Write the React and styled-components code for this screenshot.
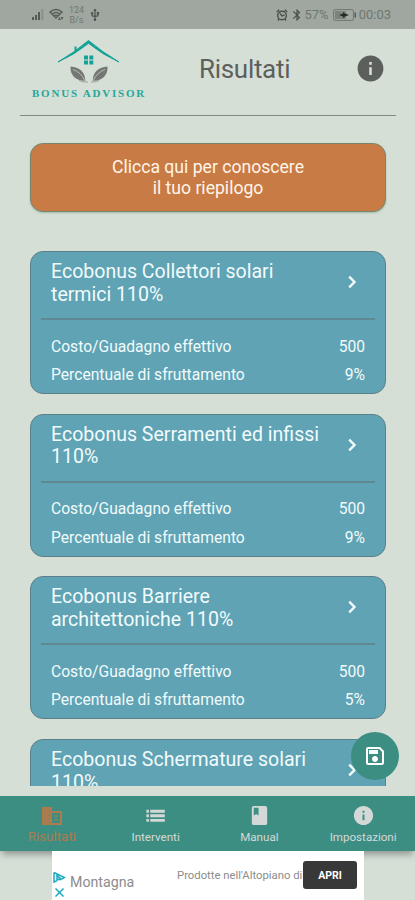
import React from "react"
import styled, { createGlobalStyle } from "styled-components"
import {
  MdBluetooth,
  MdBook,
  MdInfo,
  MdOutlineSave,
  MdUsb,
} from "react-icons/md"

const SignalIcon = () => (
  <svg width="13" height="13" viewBox="0 0 13 13">
    <path d="M0 12V9h2v3zM3 12V7h2v5zM6 12V4h2v8z" fill="#555b56" />
    <path d="M9 12V1h2.5v11z" fill="#8b938c" />
  </svg>
)

const WifiIcon = () => (
  <svg width="15" height="13" viewBox="0 0 15 13">
    <g fill="none" stroke="#555b56" strokeWidth="1.3">
      <path d="M1 4q6-5 12 0L7 10z" />
      <path d="M3 6q4-3 8 0M5 8q2-1.6 4 0" />
    </g>
    <path d="M9 12l1.5-3 1.5 3zM11.5 9h3L13 12z" fill="#555b56" />
  </svg>
)

const AlarmIcon = () => (
  <svg width="12" height="12" viewBox="0 0 12 12">
    <g fill="none" stroke="#4b514c" strokeWidth="1.4">
      <circle cx="6" cy="6.5" r="4.3" />
      <path d="M.7 3L3.2.8M11.3 3L8.8.8M4 4.5L6 7l2.4-1M3 10l-1 1.5M9 10l1 1.5" />
    </g>
  </svg>
)

const BatteryIcon = () => (
  <svg width="24" height="12" viewBox="0 0 24 12">
    <rect x=".6" y=".6" width="19.8" height="10.8" rx="1.5" fill="none" stroke="#6f776f" />
    <path d="M2 2h11v8H2z" fill="#7b837c" />
    <path d="M6 6l4-1.5V3l2 1.5L16 6l-4 1.5L10 9V7.5z" fill="#252a26" />
    <path d="M21.5 3.5H23v5h-1.5z" fill="#555b56" />
  </svg>
)

const ChevronIcon = () => (
  <svg width="24" height="24" viewBox="0 0 24 24">
    <path d="M9.2 6.7l5.3 5.3-5.3 5.3" fill="none" stroke="currentColor" strokeWidth="2.4" />
  </svg>
)

const OfficeIcon = ({ size }) => (
  <svg width={size} height={size} viewBox="0 0 24 24" fill="currentColor">
    <path d="M2 3h10v4h10v14H2zm10 6v10h8V9z" fillRule="evenodd" />
    <path d="M14.5 11h3v2h-3zM14.5 15h3v2h-3z" opacity=".75" />
    <path
      d="M4 7h2M8 7h2M4 11h2M8 11h2M4 15h2M8 15h2M4 18.5h2M8 18.5h2"
      stroke="#7f8464"
      strokeWidth=".9"
    />
  </svg>
)

const ListIcon = ({ size }) => (
  <svg width={size} height={size} viewBox="0 0 24 24" fill="currentColor">
    <path d="M2.5 6h2.6v3H2.5zM2.5 10.8h2.6v3H2.5zM2.5 15.6h2.6v3H2.5z" />
    <path d="M6.5 6h15.2v3H6.5zM6.5 10.8h15.2v3H6.5zM6.5 15.6h15.2v3H6.5z" />
  </svg>
)

const HouseLogo = () => (
  <svg width="64" height="46" viewBox="0 0 64 46">
    <path
      d="M1 24Q18 14 31.5 2.5 45 14 62 24 45 16.5 31.5 5.3 18 16.5 1 24z"
      fill="#13a396"
      stroke="#13a396"
      strokeWidth="1"
    />
    <path d="M17.5 14V8.5h2v4z" fill="#13a396" />
    <path
      d="M27 17.5h4v4h-4zM32.3 17.5h4v4h-4zM27 22.5h4v4h-4zM32.3 22.5h4v4h-4z"
      fill="#13a396"
    />
    <g fill="#747773">
      <path d="M13.5 28.5c9 1 14.5 5 14.8 14.2C19 43 13 37.5 13.5 28.5z" />
      <path d="M50.5 28.5c-9 1-14.5 5-14.8 14.2C45 43 51 37.5 50.5 28.5z" />
    </g>
    <g fill="none" stroke="#c3ccc4" strokeWidth=".8">
      <path d="M16 31.5q8 3 11.5 10.5" />
      <path d="M48 31.5q-8 3-11.5 10.5" />
    </g>
    <path
      d="M22 42.5q5 2.2 9 1.5M42 42.5q-5 2.2-8 1.5"
      fill="none"
      stroke="#8b8f8a"
      strokeWidth=".8"
    />
  </svg>
)

const AdChoices = () => (
  <svg width="13" height="29" viewBox="0 0 13 29">
    <g fill="none" stroke="#19aac0" strokeWidth="1.5">
      <path d="M1 2.5V12l2-1M1 2.5l10.5 5-5 2.7M4 5.5v5L7 8z" />
      <path d="M2.5 18.5l8 8M10.5 18.5l-8 8" />
    </g>
  </svg>
)

const results = [
  { title: "Ecobonus Collettori solari termici 110%", cost: "500", usage: "9%" },
  { title: "Ecobonus Serramenti ed infissi 110%", cost: "500", usage: "9%" },
  {
    title: "Ecobonus Barriere architettoniche 110%",
    cost: "500",
    usage: "5%",
  },
  { title: "Ecobonus Schermature solari 110%" },
]

const tabs = [
  { label: "Risultati", icon: OfficeIcon, active: true, size: 13.4 },
  { label: "Interventi", icon: ListIcon, size: 11.6 },
  { label: "Manual", icon: MdBook, size: 11.6 },
  { label: "Impostazioni", icon: MdInfo, size: 11.6 },
]

const ResultCard = ({ title, cost, usage }) => (
  <StyledCard>
    <StyledCardHead>
      <StyledCardTitle>{title}</StyledCardTitle>
      <ChevronIcon />
    </StyledCardHead>
    {cost && (
      <StyledCardBody>
        <StyledCardRow>
          <span>Costo/Guadagno effettivo</span>
          <span>{cost}</span>
        </StyledCardRow>
        <StyledCardRow>
          <span>Percentuale di sfruttamento</span>
          <span>{usage}</span>
        </StyledCardRow>
      </StyledCardBody>
    )}
  </StyledCard>
)

const App = () => {
  return (
    <StyledScreen>
      <GlobalStyle />
      <StyledStatusBar>
        <StyledStatusGroup $gap="4px">
          <SignalIcon />
          <WifiIcon />
          <StyledSpeed>
            <span>124</span>
            <span>B/s</span>
          </StyledSpeed>
          <MdUsb size={14} />
        </StyledStatusGroup>
        <StyledStatusGroup $gap="2px">
          <AlarmIcon />
          <StyledBattery>
            <MdBluetooth size={14} />
            <span>57%</span>
          </StyledBattery>
          <BatteryIcon />
          <span>00:03</span>
        </StyledStatusGroup>
      </StyledStatusBar>
      <StyledHeader>
        <StyledBrand>
          <HouseLogo />
          <StyledBrandName>BONUS ADVISOR</StyledBrandName>
        </StyledBrand>
        <StyledHeading>Risultati</StyledHeading>
        <MdInfo size={31} />
      </StyledHeader>
      <StyledSummaryButton>
        Clicca qui per conoscere
        <br />
        il tuo riepilogo
      </StyledSummaryButton>
      <StyledList>
        {results.map(result => (
          <ResultCard key={result.title} {...result} />
        ))}
      </StyledList>
      <StyledSaveButton aria-label="Salva">
        <MdOutlineSave size={24} />
      </StyledSaveButton>
      <StyledTabBar>
        {tabs.map(({ label, icon: Icon, active, size }) => (
          <StyledTab key={label} $active={active} $size={size}>
            <Icon size={active ? 24 : 23} />
            <span>{label}</span>
          </StyledTab>
        ))}
      </StyledTabBar>
      <StyledAd>
        <AdChoices />
        <StyledAdTitle>Montagna</StyledAdTitle>
        <StyledAdText>Prodotte nell'Altopiano di</StyledAdText>
        <StyledAdButton>APRI</StyledAdButton>
      </StyledAd>
    </StyledScreen>
  )
}

const GlobalStyle = createGlobalStyle`
  body {
    margin: 0;
    background: #d5dfd6;
    font-family: Roboto, sans-serif;
  }
  * {
    box-sizing: border-box;
  }
  svg {
    flex-shrink: 0;
  }
`

const StyledScreen = styled.div`
  position: relative;
  display: flex;
  flex-direction: column;
  width: 415px;
  height: 900px;
  overflow: hidden;
  background: #d5dfd6;
`

const StyledStatusBar = styled.div`
  display: flex;
  justify-content: space-between;
  flex-shrink: 0;
  height: 29px;
  padding: 0 24px 0 32px;
  background: #9fa7a0;
  color: #4b514c;
`

const StyledStatusGroup = styled.div`
  display: flex;
  align-items: center;
  gap: ${props => props.$gap};
  font-size: 13px;

  span {
    color: #6f776f;
  }
`

const StyledSpeed = styled.div`
  display: flex;
  flex-direction: column;
  align-items: center;
  width: 17px;
  margin-right: -1px;
  font-size: 9px;
  line-height: 10px;
`

const StyledBattery = styled.div`
  display: flex;
  align-items: center;
  margin-right: 2px;
`

const StyledHeader = styled.header`
  display: flex;
  flex-shrink: 0;
  height: 87px;
  margin: 0 19px 0 20px;
  padding: 9px 10px 0 12px;
  border-bottom: 1px solid #7e8a82;
  color: #5d5f5d;

  > svg {
    margin: 15px 0 0 auto;
  }
`

const StyledBrand = styled.div`
  display: flex;
  flex-direction: column;
  align-items: center;
  width: 114px;
`

const StyledBrandName = styled.span`
  margin-top: 3px;
  font: bold 11px/13px "Liberation Serif", serif;
  letter-spacing: 1.8px;
  white-space: nowrap;
  color: #26a79b;
`

const StyledHeading = styled.h1`
  margin: 13px 0 0 53px;
  font-size: 26px;
  font-weight: 400;
  letter-spacing: -0.3px;
  line-height: 36px;
`

const StyledSummaryButton = styled.button`
  flex-shrink: 0;
  height: 69px;
  margin: 27px 29px 0 30px;
  padding: 0;
  border: 1px solid #77866a;
  border-radius: 13px;
  background: #c97b45;
  color: #fff5e8;
  font-family: inherit;
  font-size: 17.6px;
  line-height: 20.5px;
  box-shadow: 0 1px 2px #a3bbae;
`

const StyledList = styled.main`
  display: flex;
  flex-direction: column;
  gap: 19.7px;
  flex-shrink: 0;
  height: 535px;
  margin: 39px 29px 10px 30px;
  overflow: hidden;
`

const StyledCard = styled.section`
  flex-shrink: 0;
  height: 143px;
  padding: 0 10px;
  border: 1px solid #5b7f88;
  border-radius: 13px;
  background: #60a3b4;
  color: #f1fbfc;
`

const StyledCardHead = styled.div`
  display: flex;
  justify-content: space-between;
  height: 68px;
  padding: 9px 11px 0 10px;
  border-bottom: 2px solid #608893;

  svg {
    margin-top: 9px;
  }
`

const StyledCardTitle = styled.h2`
  width: 276px;
  margin: 0;
  font-size: 19.55px;
  font-weight: 400;
  line-height: 22.5px;
`

const StyledCardBody = styled.div`
  padding: 12.6px 10px 0;
`

const StyledCardRow = styled.div`
  display: flex;
  justify-content: space-between;
  font-size: 15.65px;
  line-height: 28.5px;
`

const StyledSaveButton = styled.button`
  position: absolute;
  top: 732px;
  left: 351px;
  display: flex;
  align-items: center;
  justify-content: center;
  width: 48px;
  height: 48px;
  padding: 0;
  border: 0;
  border-radius: 50%;
  background: #3c8e83;
  color: #fff;
`

const StyledTabBar = styled.nav`
  z-index: 1;
  display: grid;
  grid-template-columns: repeat(4, 1fr);
  flex-shrink: 0;
  height: 55px;
  background: #3c8e83;
  box-shadow: 0 5px 7px -2px #89918b;
`

const StyledTab = styled.div`
  display: flex;
  flex-direction: column;
  align-items: center;
  padding-top: 8px;
  font-size: ${props => props.$size}px;
  line-height: ${props => (props.$active ? "17px" : "20px")};
  color: ${props => (props.$active ? "#ad7b4d" : "#d4d9d7")};
`

const StyledAd = styled.aside`
  z-index: 2;
  display: flex;
  flex-shrink: 0;
  width: 312px;
  height: 49px;
  margin-left: 52px;
  padding-left: 1px;
  background: #fff;

  > svg {
    margin-top: 19px;
  }
`

const StyledAdTitle = styled.span`
  width: 107px;
  padding-left: 4px;
  font-size: 14.2px;
  line-height: 62px;
  color: #8c8c8c;
`

const StyledAdText = styled.span`
  width: 130px;
  padding-left: 4px;
  overflow: hidden;
  white-space: nowrap;
  font-size: 11.3px;
  line-height: 49px;
  color: #8c8c8c;
`

const StyledAdButton = styled.button`
  width: 54px;
  height: 28px;
  margin-top: 10px;
  padding: 0;
  border: 0;
  border-radius: 3px;
  background: #393838;
  color: #fff;
  font: bold 10.5px Roboto, sans-serif;
`

export default App
